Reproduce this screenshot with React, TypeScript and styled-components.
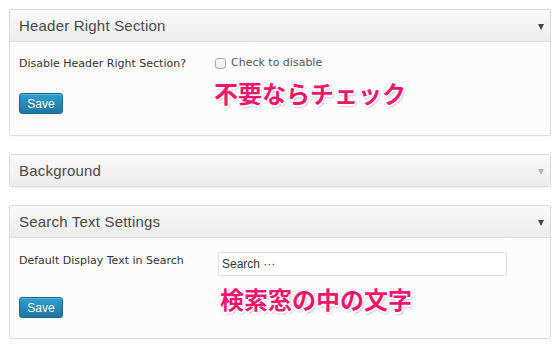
import React from 'react';
import styled, { createGlobalStyle } from 'styled-components';

const GlobalStyle = createGlobalStyle`
    html, body {
        margin: 0;
        padding: 0;
        background: #ffffff;
    }
    body {
        font-family: "Liberation Sans", Arial, sans-serif;
    }
`;

const Page = styled.div`
    width: 558px;
    height: 347px;
    box-sizing: border-box;
    padding: 9px 7px 0 9px;
    display: flex;
    flex-direction: column;
    gap: 18px;
`;

const Panel = styled.div`
    border: 1px solid #dcdcdc;
    border-radius: 2px;
    background: #fcfcfc;
    box-shadow: 0 1px 1px rgba(0, 0, 0, .04);
`;

const PanelHeader = styled.div<{ $open?: boolean }>`
    height: 31px;
    display: flex;
    align-items: center;
    justify-content: space-between;
    padding: 0 6px 0 9px;
    background: linear-gradient(to bottom, #f9f9f9, #ececec);
    border-bottom: ${p => (p.$open ? '1px solid #dfdfdf' : 'none')};
`;

const Title = styled.h3`
    margin: 0;
    font-size: 15px;
    font-weight: normal;
    color: #4a4a4a;
    letter-spacing: .2px;
`;

const Arrow = styled.span<{ $dim?: boolean }>`
    width: 0;
    height: 0;
    border-left: 3.5px solid transparent;
    border-right: 3.5px solid transparent;
    border-top: 6px solid ${p => (p.$dim ? '#b4b4b4' : '#464646')};
    margin-top: 2px;
`;

const PanelBody = styled.div<{ $bottom: number }>`
    padding: 14px 10px ${p => p.$bottom}px 9px;
`;

const FieldRow = styled.div`
    display: flex;
    align-items: flex-start;
`;

const Label = styled.label<{ $top: number }>`
    width: 199px;
    flex: none;
    margin-top: ${p => p.$top}px;
    font-family: "DejaVu Sans", Verdana, sans-serif;
    font-size: 11px;
    line-height: 14px;
    color: #333;
`;

const Field = styled.div`
    position: relative;
    flex: none;
    display: flex;
    align-items: center;
`;

const CheckLabel = styled.label`
    display: flex;
    align-items: center;
    margin-left: -3px;
    font-family: "DejaVu Sans", Verdana, sans-serif;
    font-size: 11px;
    line-height: 14px;
    color: #555;
`;

const CheckBox = styled.input`
    appearance: none;
    width: 11px;
    height: 11px;
    margin: 0 5px 0 0;
    border: 1px solid #a9a9a9;
    border-radius: 3px;
    background: linear-gradient(to bottom, #ffffff, #ebebeb);
`;

const TextInput = styled.input`
    width: 289px;
    height: 24px;
    box-sizing: border-box;
    margin: 0;
    padding: 0 3px;
    border: 1px solid #dddddd;
    border-radius: 3px;
    background: #ffffff;
    font-family: "Liberation Sans", Arial, sans-serif;
    font-size: 12px;
    color: #333;
    outline: none;
`;

const Note = styled.span<{ $left: number; $top: number }>`
    position: absolute;
    left: ${p => p.$left}px;
    top: ${p => p.$top}px;
    white-space: nowrap;
    font-family: "Noto Sans CJK JP", sans-serif;
    font-weight: 700;
    font-size: 24px;
    line-height: 26px;
    color: #f0166e;
    text-shadow:
        -1px -1px 0 #fff, 1px -1px 0 #fff, -1px 1px 0 #fff, 1px 1px 0 #fff,
        0 -1.5px 0 #fff, 0 1.5px 0 #fff, -1.5px 0 0 #fff, 1.5px 0 0 #fff,
        1px 2px 3px rgba(0, 0, 0, .35);
`;

const SaveButton = styled.button<{ $gap: number }>`
    display: block;
    margin-top: ${p => p.$gap}px;
    width: 44px;
    height: 21px;
    padding: 0;
    border: 1px solid #1b6a8f;
    border-radius: 3px;
    background: linear-gradient(to bottom, #2e9fd2, #1f76a0);
    box-shadow: inset 0 1px 0 rgba(120, 200, 230, .5);
    font-family: "Liberation Sans", Arial, sans-serif;
    font-size: 12px;
    color: #ffffff;
`;

const App: React.FC = () => {
    return (
        <>
            <GlobalStyle />
            <Page>
                <Panel>
                    <PanelHeader $open>
                        <Title>Header Right Section</Title>
                        <Arrow />
                    </PanelHeader>
                    <PanelBody $bottom={21}>
                        <FieldRow>
                            <Label $top={1}>Disable Header Right Section?</Label>
                            <Field>
                                <CheckLabel>
                                    <CheckBox type='checkbox' />
                                    Check to disable
                                </CheckLabel>
                                <Note $left={-4} $top={24}>不要ならチェック</Note>
                            </Field>
                        </FieldRow>
                        <SaveButton $gap={22}>Save</SaveButton>
                    </PanelBody>
                </Panel>

                <Panel>
                    <PanelHeader>
                        <Title>Background</Title>
                        <Arrow $dim />
                    </PanelHeader>
                </Panel>

                <Panel>
                    <PanelHeader $open>
                        <Title>Search Text Settings</Title>
                        <Arrow />
                    </PanelHeader>
                    <PanelBody $bottom={20}>
                        <FieldRow>
                            <Label $top={2}>Default Display Text in Search</Label>
                            <Field>
                                <TextInput defaultValue='Search ···' />
                                <Note $left={2} $top={34}>検索窓の中の文字</Note>
                            </Field>
                        </FieldRow>
                        <SaveButton $gap={21}>Save</SaveButton>
                    </PanelBody>
                </Panel>
            </Page>
        </>
    );
}

export default App;
